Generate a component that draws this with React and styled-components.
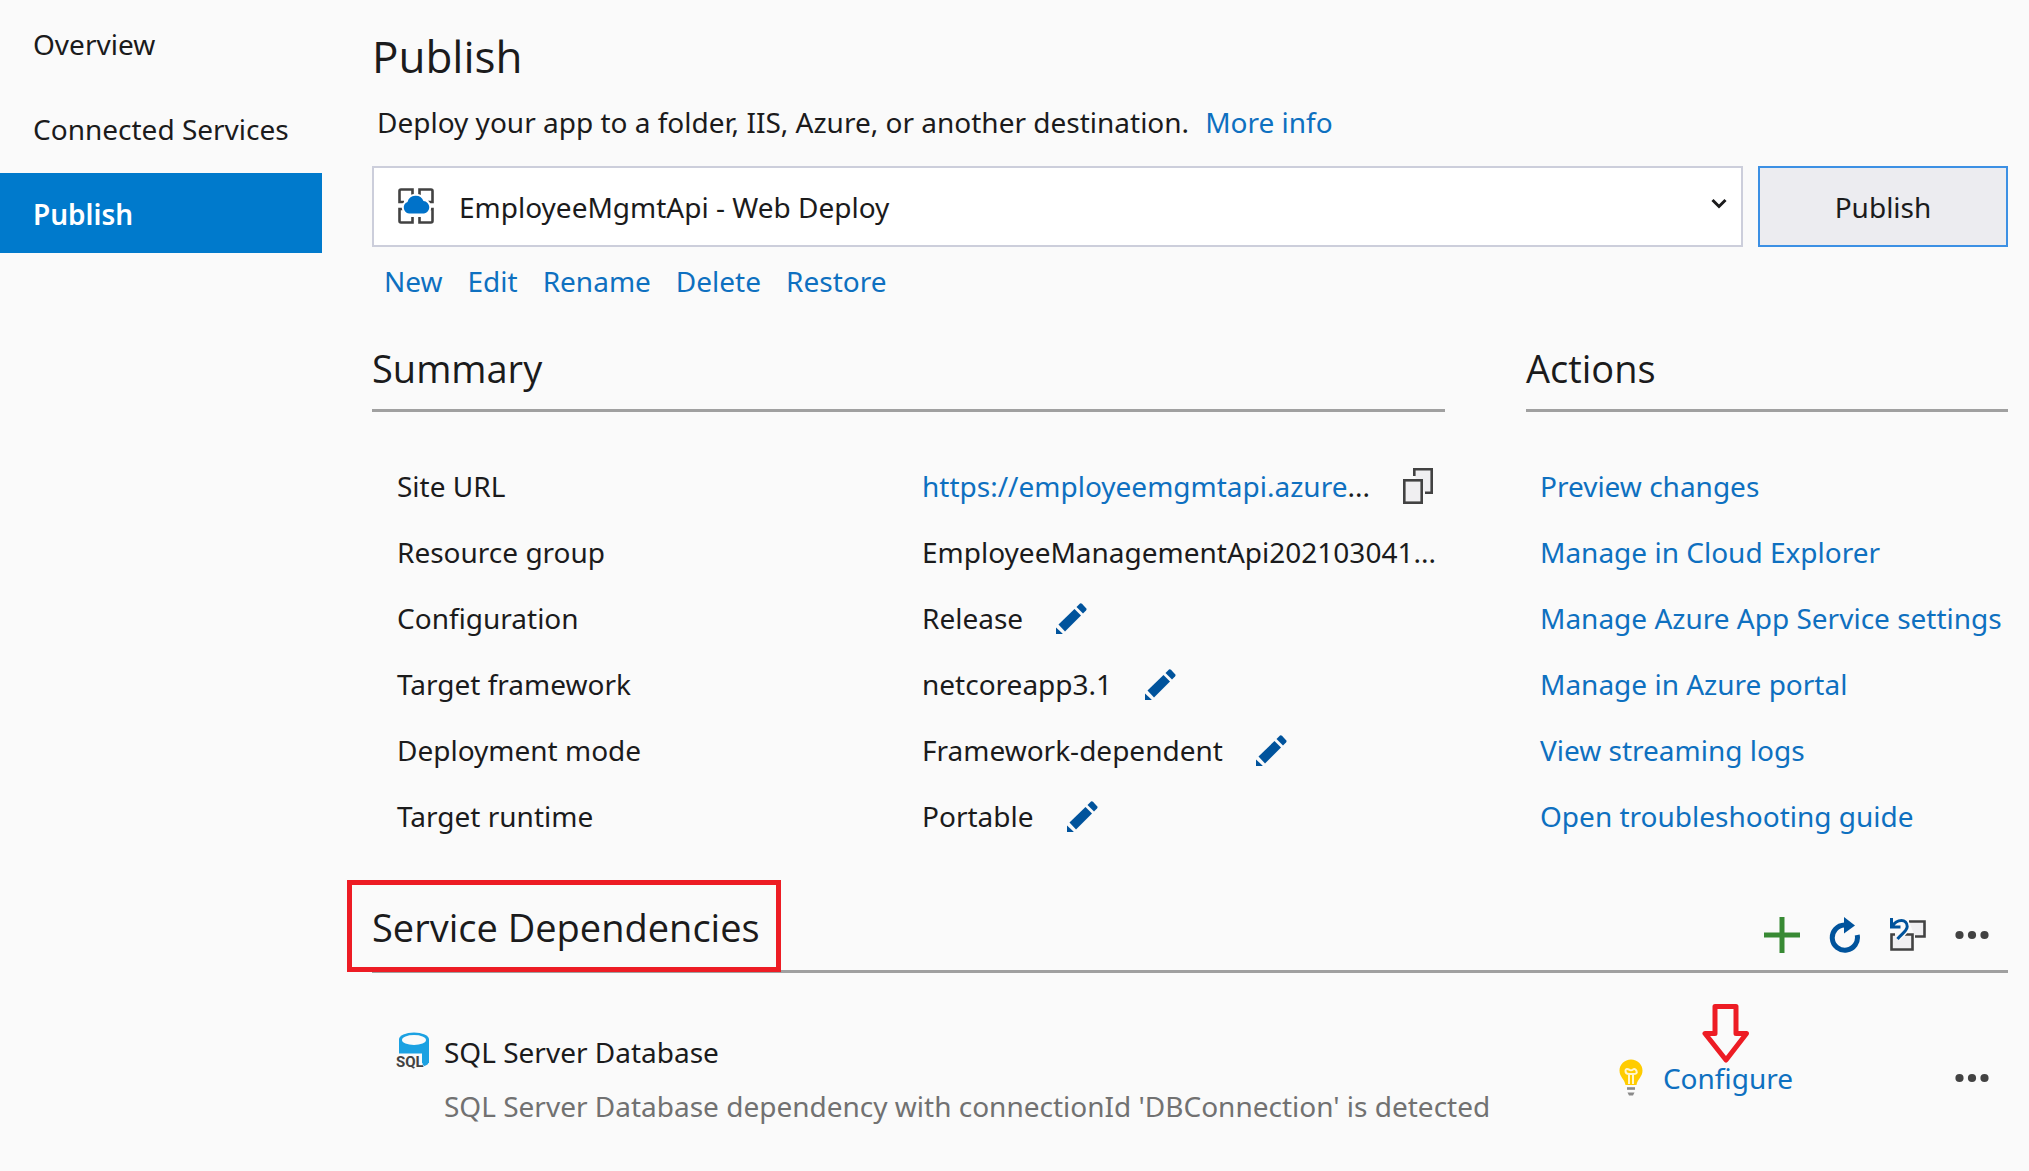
import React from 'react';
import styled, { createGlobalStyle } from "styled-components"

const GlobalStyle = createGlobalStyle`
    * {
        box-sizing: border-box;
    }
    body {
        margin: 0;
        background-color: #fafafa;
        color: #1b1b1c;
        font-family: "Noto Sans", "Open Sans", sans-serif;
        font-size: 28px;
        line-height: 40px;
    }
`;

const Page = styled.div`
    display: flex;
    min-height: 100vh;
    padding-right: 21px;
`;

const Sidebar = styled.nav`
    flex: 0 0 322px;
    display: flex;
    flex-direction: column;
    gap: 5px;
    padding-top: 3px;
`;

const NavItem = styled.a`
    height: 80px;
    padding: 2px 0 0 33px;
    display: flex;
    align-items: center;
    text-decoration: none;
    white-space: nowrap;
    color: ${props => props.$active ? "#fff" : "#1b1b1c"};
    background-color: ${props => props.$active ? "#007acc" : "transparent"};
    font-weight: ${props => props.$active ? 600 : 400};
`;

const Main = styled.main`
    flex: 1;
    min-width: 0;
    margin-left: 50px;
    padding-top: 24px;
`;

const Title = styled.h1`
    margin: 0;
    font-family: "Open Sans", sans-serif;
    font-size: 44px;
    line-height: 64px;
    font-weight: 400;
`;

const Link = styled.a`
    color: #0e70c0;
    text-decoration: none;
    white-space: nowrap;
`;

const Description = styled.p`
    margin: 14px 0 0 5px;
    display: flex;
    gap: 16px;
    white-space: nowrap;
`;

const ProfileBar = styled.div`
    margin-top: 24px;
    display: flex;
    gap: 15px;
`;

const SelectBox = styled.div`
    flex: 1;
    position: relative;
`;

const ProfileSelect = styled.select`
    appearance: none;
    width: 100%;
    height: 81px;
    padding: 0 60px 0 85px;
    border: 2px solid #cccedb;
    border-radius: 0;
    background-color: #fff;
    color: inherit;
    font: inherit;
`;

const ProfileIcon = styled.svg`
    position: absolute;
    left: 26px;
    top: 22px;
    pointer-events: none;
`;

const Chevron = styled.svg`
    position: absolute;
    right: 16px;
    top: 32px;
    pointer-events: none;
`;

const PublishButton = styled.button`
    width: 250px;
    height: 81px;
    border: 2px solid #3c90e4;
    background-color: #ececf0;
    color: inherit;
    font: inherit;
`;

const ProfileLinks = styled.div`
    margin-top: 14px;
    padding-left: 12px;
    display: flex;
    gap: 25px;
`;

const Columns = styled.div`
    margin-top: 40px;
    display: grid;
    grid-template-columns: minmax(0, 1fr) 482px;
    column-gap: 81px;
`;

const SectionTitle = styled.h2`
    margin: 0;
    font-family: "Open Sans", sans-serif;
    font-size: 38px;
    line-height: 54px;
    font-weight: 400;
    white-space: nowrap;
`;

const ColumnTitle = styled(SectionTitle)`
    height: 71px;
    border-bottom: 3px solid #a0a0a0;
`;

const SummaryList = styled.dl`
    margin: 41px 0 0;
    padding-left: 25px;
`;

const SummaryRow = styled.div`
    height: 66px;
    display: grid;
    grid-template-columns: 525px 1fr;
    align-items: center;
    white-space: nowrap;
`;

const Value = styled.dd`
    margin: 0;
    display: flex;
    align-items: center;
    gap: 33px;
`;

const ActionList = styled.ul`
    margin: 41px 0 0;
    padding: 0 0 0 14px;
    list-style: none;
`;

const ActionItem = styled.li`
    height: 66px;
    display: flex;
    align-items: center;
`;

const IconButton = styled.button`
    padding: 0;
    border: none;
    background: none;
    display: flex;
    cursor: pointer;
`;

const DependencyHeader = styled.div`
    margin-top: 51px;
    height: 73px;
    display: flex;
    justify-content: space-between;
    border-bottom: 3px solid #a0a0a0;
`;

const Highlight = styled.div`
    position: relative;
    &::after {
        content: "";
        position: absolute;
        inset: -20px -21px -2px -25px;
        border: 5px solid #ed1c24;
    }
`;

const Toolbar = styled.div`
    display: flex;
    align-items: center;
    gap: 29px;
    height: 70px;
    padding-right: 19px;
`;

const Dependency = styled.div`
    margin-top: 59px;
    padding: 0 19px 0 25px;
    display: flex;
    align-items: flex-start;
`;

const DependencyText = styled.div`
    flex: 1;
    margin-left: 13px;
`;

const DependencyName = styled.div`
    line-height: 54px;
    margin-top: -7px;
`;

const Detail = styled.div`
    line-height: 54px;
    color: #717171;
`;

const DependencyActions = styled.div`
    margin-top: 26px;
    height: 40px;
    display: flex;
    align-items: center;
`;

const ConfigureBox = styled.div`
    position: relative;
    margin: 0 162px 0 20px;
`;

const Arrow = styled.svg`
    position: absolute;
    left: 39px;
    bottom: 34px;
`;

const summary = [
    { label: "Site URL", url: "https://employeemgmtapi.azure", copy: true },
    { label: "Resource group", value: "EmployeeManagementApi202103041..." },
    { label: "Configuration", value: "Release", edit: true },
    { label: "Target framework", value: "netcoreapp3.1", edit: true },
    { label: "Deployment mode", value: "Framework-dependent", edit: true },
    { label: "Target runtime", value: "Portable", edit: true },
];

const actions = [
    "Preview changes",
    "Manage in Cloud Explorer",
    "Manage Azure App Service settings",
    "Manage in Azure portal",
    "View streaming logs",
    "Open troubleshooting guide",
];

const PencilIcon = () => (
    <svg width="31" height="31" viewBox="0 0 31 31" fill="#00539c">
        <path d="M0 31V24.5L6.5 30.5V31Z" />
        <path d="M2.5 21.5L18.5 6L25 12.5L9 28.5Z" />
        <path d="M20.5 4L24 .5Q25 0 26 .8L30.3 5.5Q31 6.5 30 7.5L27 10.5Z" />
    </svg>
)

const CopyIcon = () => (
    <svg width="31" height="36" viewBox="0 0 31 36" fill="#f0eff1" stroke="#424242" strokeWidth="2.6">
        <path d="M11.3 8V1.3H28.7V24.7H22" />
        <rect x="1.3" y="12.3" width="17.4" height="22.4" />
    </svg>
)

const DotsIcon = () => (
    <svg width="34" height="10" viewBox="0 0 34 10" fill="#424242">
        <circle cx="4.5" cy="5" r="4.1" />
        <circle cx="17" cy="5" r="4.1" />
        <circle cx="29.5" cy="5" r="4.1" />
    </svg>
)

const PlusIcon = () => (
    <svg width="36" height="36" viewBox="0 0 36 36" fill="#388a34">
        <path d="M15.5 0H20.5V15.5H36V20.5H20.5V36H15.5V20.5H0V15.5H15.5Z" />
    </svg>
)

const RefreshIcon = () => (
    <svg width="32" height="36" viewBox="0 0 32 36">
        <path d="M15.5 8A12.6 12.6 0 1 0 28.2 18" fill="none" stroke="#00539c" strokeWidth="5" />
        <path d="M15 0L26 8.5L15 16.5Z" fill="#00539c" />
    </svg>
)

const RestoreIcon = () => (
    <svg width="36" height="36" viewBox="0 0 36 36" fill="none">
        <path d="M19 4.5H34.5V19.5H25" fill="#f0eff1" stroke="#424242" strokeWidth="2.6" />
        <path d="M5 17.5H1.5V32.5H22.5V17.5H15" fill="#f0eff1" stroke="#424242" strokeWidth="2.6" />
        <path d="M2 9C7 1.5 17 1.5 17 9.5C17 14 11 17.5 7.5 22" stroke="#fafafa" strokeWidth="6" />
        <path d="M1.5 1V10H10.5M2 9.5C7 1.5 17.2 1.5 17.2 9.5C17.2 14 11 17.5 7.5 22" stroke="#00539c" strokeWidth="3" />
    </svg>
)

const SqlIcon = () => (
    <svg width="34" height="40" viewBox="0 0 34 40" overflow="visible">
        <path d="M2 7V31H32V7Z" fill="#1ba1e2" />
        <path d="M25 28H32V29Q32 33 26 34.5Z" fill="#1ba1e2" />
        <ellipse cx="17" cy="7.5" rx="15" ry="7" fill="#1ba1e2" />
        <ellipse cx="17" cy="8" rx="12" ry="5" fill="#fafafa" />
        <path d="M-2 21.5H25V33H27V40H-2Z" fill="#fafafa" />
        <text x="-1" y="35" fontSize="15" fontWeight="700" fontFamily="Roboto, sans-serif" fill="#424242">SQL</text>
    </svg>
)

const BulbIcon = () => (
    <svg width="24" height="38" viewBox="0 0 24 38" fill="none">
        <path d="M12 .5C5.5 .5 .5 5.5 .5 11.5C.5 18 5.5 20 6.5 26H17.5C18.5 20 23.5 18 23.5 11.5C23.5 5.5 18.5 .5 12 .5Z" fill="#fc0" />
        <path d="M10 25V15M14 25V15M10 15Q6.5 15 6.5 12T10 10.5Q12 12 14 10.5T17.5 12T14 15Z" stroke="#fff6d0" strokeWidth="2" />
        <path d="M8 29.5H16" stroke="#8a8a8a" strokeWidth="2.6" />
        <path d="M8.5 33.5H15.5L14 36.5H10Z" fill="#8a8a8a" />
    </svg>
)

export default function App() {
    return (
        <Page>
            <GlobalStyle />
            <Sidebar>
                <NavItem href="#overview">Overview</NavItem>
                <NavItem href="#services">Connected Services</NavItem>
                <NavItem href="#publish" $active>Publish</NavItem>
            </Sidebar>
            <Main>
                <Title>Publish</Title>
                <Description>
                    <span>Deploy your app to a folder, IIS, Azure, or another destination.</span>
                    <Link href="#info">More info</Link>
                </Description>
                <ProfileBar>
                    <SelectBox>
                        <ProfileSelect aria-label="Publish profile">
                            <option>EmployeeMgmtApi - Web Deploy</option>
                        </ProfileSelect>
                        <ProfileIcon width="36" height="36" viewBox="0 0 36 36" fill="none">
                            <path d="M14.5 7V1.5H3Q1.5 1.5 1.5 3V14H6M21.5 7V1.5H33Q34.5 1.5 34.5 3V14H30M6 21H1.5V33Q1.5 34.5 3 34.5H14.5V29M30 21H34.5V33Q34.5 34.5 33 34.5H21.5V29" stroke="#424242" strokeWidth="2.6" />
                            <path d="M11 25.5A6 6 0 0 1 9.5 14A8.5 8.5 0 0 1 25.5 13A6.3 6.3 0 0 1 26 25.5Z" fill="#0072c9" stroke="#fff" strokeWidth="4" paintOrder="stroke" />
                        </ProfileIcon>
                        <Chevron width="16" height="12" viewBox="0 0 16 12" fill="none">
                            <path d="M1.5 2L8 8.5L14.5 2" stroke="#1b1b1c" strokeWidth="3" />
                        </Chevron>
                    </SelectBox>
                    <PublishButton>Publish</PublishButton>
                </ProfileBar>
                <ProfileLinks>
                    <Link href="#new">New</Link>
                    <Link href="#edit">Edit</Link>
                    <Link href="#rename">Rename</Link>
                    <Link href="#delete">Delete</Link>
                    <Link href="#restore">Restore</Link>
                </ProfileLinks>
                <Columns>
                    <section>
                        <ColumnTitle>Summary</ColumnTitle>
                        <SummaryList>
                            {summary.map(row => (
                                <SummaryRow key={row.label}>
                                    <dt>{row.label}</dt>
                                    <Value>
                                        {row.url ? <span><Link href="#site">{row.url}</Link>...</span> : <span>{row.value}</span>}
                                        {row.copy && <IconButton aria-label="Copy"><CopyIcon /></IconButton>}
                                        {row.edit && <IconButton aria-label="Edit"><PencilIcon /></IconButton>}
                                    </Value>
                                </SummaryRow>
                            ))}
                        </SummaryList>
                    </section>
                    <section>
                        <ColumnTitle>Actions</ColumnTitle>
                        <ActionList>
                            {actions.map(action => (
                                <ActionItem key={action}><Link href="#action">{action}</Link></ActionItem>
                            ))}
                        </ActionList>
                    </section>
                </Columns>
                <DependencyHeader>
                    <Highlight>
                        <SectionTitle>Service Dependencies</SectionTitle>
                    </Highlight>
                    <Toolbar>
                        <IconButton aria-label="Add"><PlusIcon /></IconButton>
                        <IconButton aria-label="Refresh"><RefreshIcon /></IconButton>
                        <IconButton aria-label="Restore"><RestoreIcon /></IconButton>
                        <IconButton aria-label="More"><DotsIcon /></IconButton>
                    </Toolbar>
                </DependencyHeader>
                <Dependency>
                    <SqlIcon />
                    <DependencyText>
                        <DependencyName>SQL Server Database</DependencyName>
                        <Detail>SQL Server Database dependency with connectionId 'DBConnection' is detected</Detail>
                    </DependencyText>
                    <DependencyActions>
                        <BulbIcon />
                        <ConfigureBox>
                            <Link href="#configure">Configure</Link>
                            <Arrow width="48" height="60" viewBox="0 0 48 60" fill="none">
                                <path d="M13 2.5H34V29.5H44.5L24 56L3 29.5H13Z" stroke="#ed1c24" strokeWidth="5" strokeLinejoin="round" />
                            </Arrow>
                        </ConfigureBox>
                        <IconButton aria-label="More"><DotsIcon /></IconButton>
                    </DependencyActions>
                </Dependency>
            </Main>
        </Page>
    )
}
